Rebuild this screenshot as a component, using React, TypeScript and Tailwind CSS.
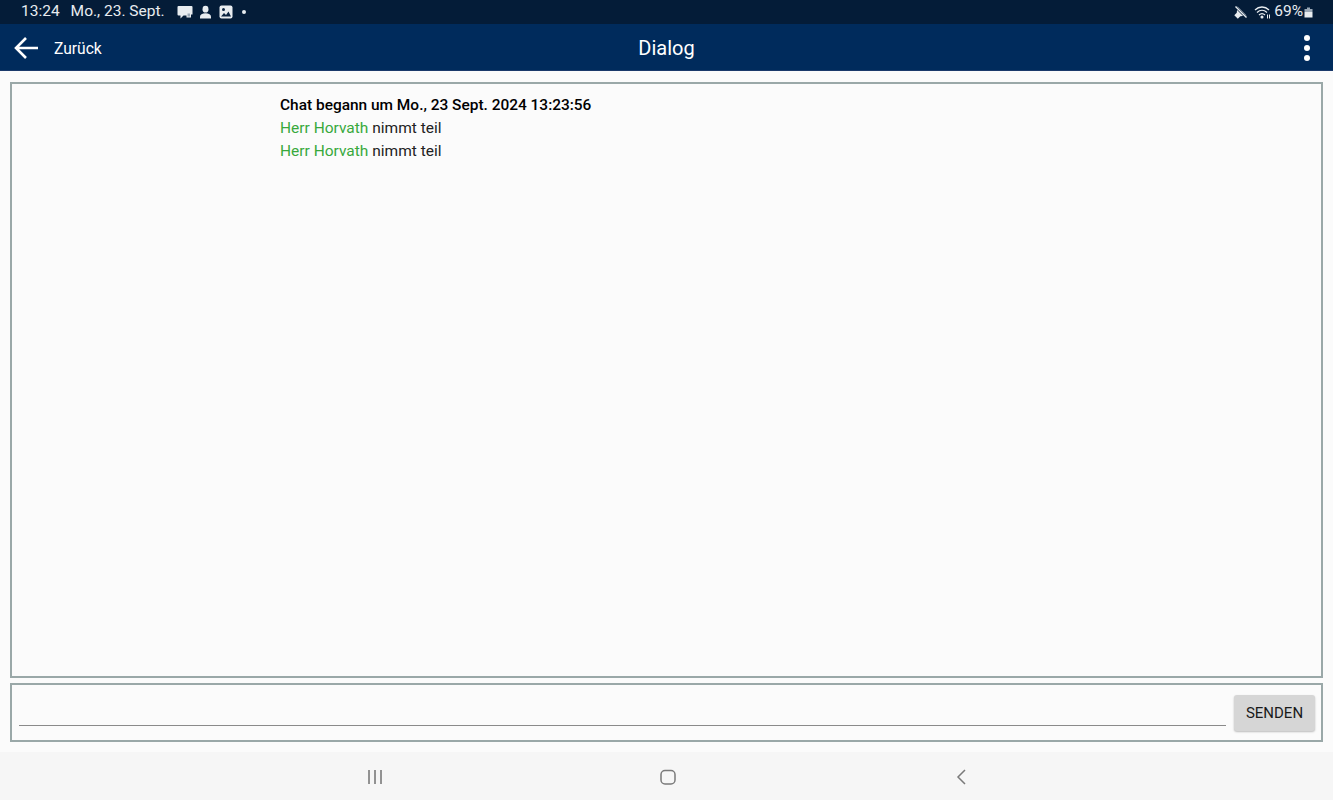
const font = { fontFamily: 'Roboto, sans-serif' };

function StatusIcons() {
  return (
    <div className="flex items-center ml-[12px] gap-[6px]">
      {/* message */}
      <svg width="16" height="15" viewBox="0 0 16 15" fill="#e8ecf0">
        <path d="M1.500 1h13a1 1 0 0 1 1 1v7.500H14v3h-4.500v-2H6.500L3.500 13.500V10.500h-2a1 1 0 0 1-1-1V2a1 1 0 0 1 1-1z" />
        <rect x="10.500" y="8.500" width="2.500" height="3" fill="#9aa7b5" />
      </svg>
      {/* contact */}
      <svg width="13" height="14" viewBox="0 0 13 14" fill="#e8ecf0">
        <ellipse cx="6.500" cy="4.200" rx="3" ry="3.400" />
        <path d="M1 13.500v-1.700c0-2.100 2.200-3.500 5.500-3.500s5.500 1.400 5.500 3.500v1.700z" />
      </svg>
      {/* picture */}
      <svg width="14" height="14" viewBox="0 0 14 14" className="ml-[1px]">
        <rect x="0.500" y="0.500" width="13" height="13" rx="2" fill="#e8ecf0" />
        <circle cx="4.500" cy="4.500" r="1.500" fill="#0a2340" />
        <path d="M2 11.500l3-3.500 2 2 2.500-3.500 2.500 5z" fill="#0a2340" />
      </svg>
      <span className="w-[4px] h-[4px] rounded-full bg-[#e8ecf0] ml-[3px]" />
    </div>
  );
}

function NavBar() {
  return (
    <div className="h-[48px] pt-[2px] bg-[#f6f6f6] flex items-center justify-center pl-[3px]">
      <div className="w-[293px] flex justify-center">
        <svg width="16" height="16" viewBox="0 0 16 16" fill="none" stroke="#7a7a7a" strokeWidth="1.600">
          <path d="M2 1v14M8 1v14M14 1v14" />
        </svg>
      </div>
      <div className="w-[293px] flex justify-center">
        <svg width="16" height="16" viewBox="0 0 16 16" fill="none" stroke="#7a7a7a" strokeWidth="1.500">
          <rect x="1" y="1.500" width="14" height="13.500" rx="4" />
        </svg>
      </div>
      <div className="w-[293px] flex justify-center">
        <svg width="12" height="16" viewBox="0 0 12 16" fill="none" stroke="#7a7a7a" strokeWidth="1.500">
          <path d="M10 1L3 8l7 7" />
        </svg>
      </div>
    </div>
  );
}

export default function App() {
  return (
    <div className="w-[1333px] h-[800px] flex flex-col bg-[#fbfbfb] overflow-hidden" style={font}>
      {/* status bar */}
      <div className="h-[24px] bg-[#041c38] flex items-center pl-[21px] pr-[20px] text-[#e8ecf0] text-[15.500px]">
        <span>13:24</span>
        <span className="ml-[11px]">Mo., 23. Sept.</span>
        <StatusIcons />
        <div className="ml-auto flex items-center">
          {/* mute */}
          <svg width="14" height="14" viewBox="0 0 14 14">
            <path d="M0 4.500h3.500L8.500 0.500v13L3.500 9.500H0z" fill="#e8ecf0" transform="rotate(-45 7 7)" />
            <path d="M1.500 1.500l11 11" stroke="#041c38" strokeWidth="2.600" />
            <path d="M1.500 1.500l11 11" stroke="#e8ecf0" strokeWidth="1.400" />
          </svg>
          {/* wifi */}
          <svg width="17" height="14" viewBox="0 0 17 14" fill="none" stroke="#e8ecf0" strokeWidth="1.300" className="ml-[6px]">
            <path d="M1 5c4-4 10-4 14 0M3 7.500c3-2.800 7-2.800 10 0M5 10c1.800-1.700 4.200-1.700 6 0" />
            <circle cx="8" cy="12" r="0.900" fill="#e8ecf0" />
            <path d="M13.500 9.500v4M15.500 9.500v4" strokeWidth="1" />
          </svg>
          <span className="ml-[3px]">69%</span>
          {/* battery */}
          <svg width="9" height="11" viewBox="0 0 9 11" className="ml-[1px]">
            <path d="M3 0.500h3v1.500h2.500V5H.5V2H3z" fill="#9aa7b5" />
            <rect x="0.500" y="5" width="8" height="5.500" fill="#e8ecf0" />
          </svg>
        </div>
      </div>

      {/* app bar */}
      <div className="h-[47px] pt-[2px] bg-[#002b5c] relative flex items-center text-white border-b border-[#1b3a6b]">
        <svg width="26" height="24" viewBox="0 0 26 24" fill="none" stroke="white" strokeWidth="2.600" className="ml-[13px]">
          <path d="M25 12H3M13 2L3 12l10 10" />
        </svg>
        <span className="ml-[15px] mt-[2px] text-[15.600px] leading-[24px]">Zurück</span>
        <span className="absolute left-0 right-0 text-center text-[20px] pointer-events-none">Dialog</span>
        <div className="ml-auto mr-[23px] flex flex-col gap-[4px]">
          <span className="w-[6px] h-[6px] rounded-full bg-white" />
          <span className="w-[6px] h-[6px] rounded-full bg-white" />
          <span className="w-[6px] h-[6px] rounded-full bg-white" />
        </div>
      </div>

      {/* content */}
      <div className="flex-1 flex flex-col px-[10px] pt-[11px] pb-[10px] gap-[5px]">
        <div className="flex-1 border-2 border-[#9aa8a8] pl-[268px] pt-[10px] text-[15.500px] leading-[23px] text-[#222222]">
          <div className="font-medium text-black text-[15.450px]">Chat begann um Mo., 23 Sept. 2024 13:23:56</div>
          <div><span className="text-[#38a93c]">Herr Horvath</span> nimmt teil</div>
          <div><span className="text-[#38a93c]">Herr Horvath</span> nimmt teil</div>
        </div>
        <div className="h-[59px] border-2 border-[#9aa8a8] flex items-center pl-[7px] pr-[6px]">
          <div className="flex-1 h-[26px] border-b border-[#8a8a8a]" />
          <button className="ml-[8px] w-[81px] h-[36px] pt-[2px] rounded-[3px] bg-[#d6d6d6] text-[15px] text-[#1a1a1a] shadow-[0_1px_2px_rgba(0,0,0,0.25)]">SENDEN</button>
        </div>
      </div>

      <NavBar />
    </div>
  );
}
